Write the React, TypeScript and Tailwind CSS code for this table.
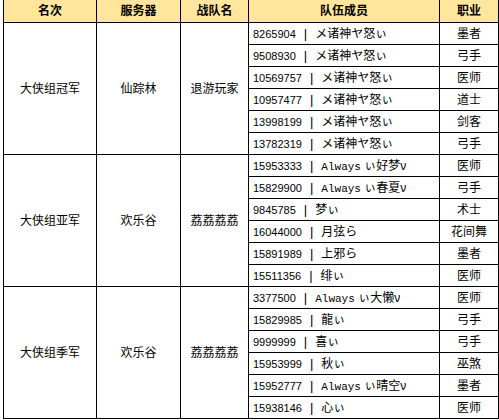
import React from "react";

type Member = { id: string; name: string; job: string };
type Group = { rank: string; server: string; team: string; members: Member[] };

const groups: Group[] = [
  {
    rank: "大侠组冠军",
    server: "仙踪林",
    team: "退游玩家",
    members: [
      { id: "8265904", name: "メ诸神ヤ怒ぃ", job: "墨者" },
      { id: "9508930", name: "メ诸神ヤ怒ぃ", job: "弓手" },
      { id: "10569757", name: "メ诸神ヤ怒ぃ", job: "医师" },
      { id: "10957477", name: "メ诸神ヤ怒ぃ", job: "道士" },
      { id: "13998199", name: "メ诸神ヤ怒ぃ", job: "剑客" },
      { id: "13782319", name: "メ诸神ヤ怒ぃ", job: "弓手" },
    ],
  },
  {
    rank: "大侠组亚军",
    server: "欢乐谷",
    team: "荔荔荔荔",
    members: [
      { id: "15953333", name: "Always ぃ好梦ν", job: "医师" },
      { id: "15829900", name: "Always ぃ春夏ν", job: "弓手" },
      { id: "9845785", name: "梦ぃ", job: "术士" },
      { id: "16044000", name: "月弦ら", job: "花间舞" },
      { id: "15891989", name: "上邪ら", job: "墨者" },
      { id: "15511356", name: "绯ぃ", job: "医师" },
    ],
  },
  {
    rank: "大侠组季军",
    server: "欢乐谷",
    team: "荔荔荔荔",
    members: [
      { id: "3377500", name: "Always ぃ大懒ν", job: "医师" },
      { id: "15829985", name: "龍ぃ", job: "弓手" },
      { id: "9999999", name: "喜ぃ", job: "弓手" },
      { id: "15953999", name: "秋ぃ", job: "巫煞" },
      { id: "15952777", name: "Always ぃ晴空ν", job: "墨者" },
      { id: "15938146", name: "心ぃ", job: "医师" },
    ],
  },
];

function Name({ text }: { text: string }) {
  // "Always" is drawn in the narrow half-width latin of the original font
  if (text.startsWith("Always")) {
    return (
      <>
        <span className="font-['Liberation_Mono',monospace] text-[11px]">Always</span>
        {text.slice(6)}
      </>
    );
  }
  return <>{text}</>;
}

export default function App() {
  return (
    <div className="w-[499px] h-[420px] bg-white pl-[3px] -mt-px font-['Liberation_Sans','Noto_Sans_CJK_SC',sans-serif] text-[12px] text-black">
      <table className="w-[495px] table-fixed border-collapse">
        <colgroup>
          <col className="w-[93px]" />
          <col className="w-[84px]" />
          <col className="w-[68px]" />
          <col className="w-[191px]" />
          <col className="w-[59px]" />
        </colgroup>
        <thead>
          <tr className="h-[23px] bg-[#ffe69c] font-bold">
            <th className="border border-black">名次</th>
            <th className="border border-black">服务器</th>
            <th className="border border-black">战队名</th>
            <th className="border border-black">队伍成员</th>
            <th className="border border-black">职业</th>
          </tr>
        </thead>
        <tbody>
          {groups.map((g) =>
            g.members.map((m, i) => (
              <tr key={g.rank + m.id} className="h-[22px]">
                {i === 0 && (
                  <>
                    <td rowSpan={6} className="border border-black text-center">
                      {g.rank}
                    </td>
                    <td rowSpan={6} className="border border-black text-center">
                      {g.server}
                    </td>
                    <td rowSpan={6} className="border border-black text-center">
                      {g.team}
                    </td>
                  </>
                )}
                <td className="border border-black pl-[4px] whitespace-nowrap">
                  <span className="text-[11px]">{m.id}</span>
                  <span className="px-[8px] text-[13px]">|</span>
                  <Name text={m.name} />
                </td>
                <td className="border border-black text-center">{m.job}</td>
              </tr>
            ))
          )}
        </tbody>
      </table>
    </div>
  );
}
